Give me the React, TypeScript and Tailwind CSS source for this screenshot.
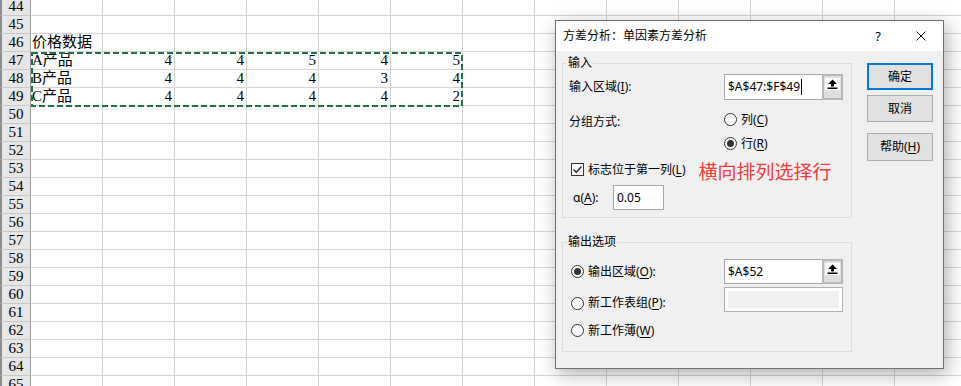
import React from "react";

const COLS = 13;

function Radio({ checked = false }: { checked?: boolean }) {
  return (
    <div className="w-[13px] h-[13px] shrink-0 rounded-full border border-[#333333] bg-white flex items-center justify-center">
      {checked && <div className="w-[7px] h-[7px] rounded-full bg-[#333333]" />}
    </div>
  );
}

function Checkbox() {
  return (
    <div className="w-[13px] h-[13px] shrink-0 border border-[#333333] bg-white flex items-center justify-center">
      <svg width="11" height="11" viewBox="0 0 11 11">
        <polyline points="1.5,5.5 4.2,8.2 9.5,2.5" fill="none" stroke="#222" strokeWidth="1.3" />
      </svg>
    </div>
  );
}

function UpArrow() {
  return (
    <svg width="11" height="10" viewBox="0 0 11 10">
      <polygon points="5.5,0.5 10,5 7,5 7,7.5 4,7.5 4,5 1,5" fill="#000" />
      <rect x="0.5" y="8.5" width="10" height="1.5" fill="#000" />
    </svg>
  );
}

function RefField({ value, cursor = false }: { value: string; cursor?: boolean }) {
  return (
    <div className="w-[119px] h-full flex border border-[#a8a8a8] bg-white">
      <div className="flex-1 flex items-center pl-[3px] text-[12px] leading-[16px]">
        <span>{value}</span>
        {cursor && <span className="ml-[1px] w-[1px] h-[16px] bg-black" />}
      </div>
      <div className="w-[21px] -my-[1px] -mr-[1px] bg-[#dedede] border-2 border-[#b8b8b8] flex flex-col items-center pt-[2px]">
        <div className="w-[15px] h-[12px] bg-white flex items-center justify-center">
          <UpArrow />
        </div>
      </div>
    </div>
  );
}

function U({ children }: { children: React.ReactNode }) {
  return <span className="underline underline-offset-2">{children}</span>;
}

export default function App() {
  const rows = Array.from({ length: 22 }, (_, i) => 44 + i);
  const data: Record<number, { a: string; nums?: number[] }> = {
    46: { a: "价格数据" },
    47: { a: "A产品", nums: [4, 4, 5, 4, 5] },
    48: { a: "B产品", nums: [4, 4, 4, 3, 4] },
    49: { a: "C产品", nums: [4, 4, 4, 4, 2] },
  };

  return (
    <div className="relative w-[961px] h-[386px] overflow-hidden bg-white">
      {/* Spreadsheet grid */}
      <div className="-mt-[2px] flex flex-col font-['Liberation_Serif','Noto_Sans_CJK_SC',serif] text-[15px] text-black">
        {rows.map((r) => {
          const d = data[r];
          return (
            <div key={r} className="flex h-[18px] shrink-0">
              <div className="w-[31px] shrink-0 h-full flex items-center justify-center bg-[#e6e6e6] border-l-2 border-l-[#8c8c8c] border-r border-r-[#9e9e9e] border-b border-b-[#c8c8c8] leading-[17px]">
                {r}
              </div>
              {Array.from({ length: COLS }, (_, c) => {
                let content: React.ReactNode = null;
                let align = "justify-start pl-[1px]";
                if (d) {
                  if (c === 0) content = d.a;
                  else if (d.nums && c <= 5) {
                    content = d.nums[c - 1];
                    align = "justify-end pr-[2px]";
                  }
                }
                return (
                  <div
                    key={c}
                    className={`w-[72px] shrink-0 h-full flex items-center whitespace-nowrap border-r border-b border-[#d4d4d4] leading-[17px] ${align}`}
                  >
                    {content}
                  </div>
                );
              })}
            </div>
          );
        })}
      </div>

      {/* Copy marquee */}
      <svg className="absolute left-[30px] top-[51px]" width="434" height="57">
        <rect x="2" y="2" width="430" height="53" fill="none" stroke="#217346" strokeWidth="2" strokeDasharray="6 3" />
      </svg>

      {/* Dialog */}
      <div className="absolute left-[555px] top-[20px] w-[389px] h-[349px] border border-[#707070] bg-[#f0f0f0] shadow-[3px_5px_18px_rgba(0,0,0,0.32)] flex flex-col font-['Noto_Sans','Noto_Sans_CJK_SC',sans-serif] text-[12px] text-black">
        <div className="h-[30px] shrink-0 bg-white flex items-center pl-[7px]">
          <span className="leading-[16px]">方差分析：单因素方差分析</span>
          <span className="ml-auto text-[13px] leading-[16px]">?</span>
          <svg className="ml-[35px] mr-[17px]" width="10" height="10" viewBox="0 0 10 10">
            <path d="M0.5 0.5 L9.5 9.5 M9.5 0.5 L0.5 9.5" stroke="#111" strokeWidth="1" />
          </svg>
        </div>

        <div className="flex pl-[6px]">
          <div className="w-[290px] pt-[4px] flex flex-col">
            <fieldset className="border border-[#dcdcdc] pb-[7px]">
              <legend className="ml-[4px] px-[1px] leading-[16px]">输入</legend>
              <div className="mt-[3px] h-[26px] flex items-center">
                <div className="w-[161px] pl-[6px] leading-[16px]">
                  输入区域(<U>I</U>):
                </div>
                <RefField value="$A$47:$F$49" cursor />
              </div>
              <div className="mt-[11px] flex">
                <div className="w-[161px] pl-[6px] pt-[2px] leading-[17px]">分组方式:</div>
                <div className="flex flex-col gap-[7px]">
                  <div className="h-[17px] flex items-center">
                    <Radio />
                    <span className="ml-[4px] leading-[16px]">
                      列(<U>C</U>)
                    </span>
                  </div>
                  <div className="h-[17px] flex items-center">
                    <Radio checked />
                    <span className="ml-[4px] leading-[16px]">
                      行(<U>R</U>)
                    </span>
                  </div>
                </div>
              </div>
              <div className="mt-[9px] h-[17px] flex items-center pl-[8px]">
                <Checkbox />
                <span className="ml-[4px] leading-[16px]">
                  标志位于第一列(<U>L</U>)
                </span>
                <span className="ml-[13px] mt-[5px] text-[19px] leading-[20px] text-[#f03c3c] whitespace-nowrap">
                  横向排列选择行
                </span>
              </div>
              <div className="mt-[7px] h-[25px] flex items-center">
                <div className="w-[50px] pl-[10px] leading-[16px]">
                  α(<U>A</U>):
                </div>
                <div className="w-[51px] h-full border border-[#a8a8a8] bg-white flex items-center pl-[3px] leading-[16px]">
                  0.05
                </div>
              </div>
            </fieldset>

            <fieldset className="mt-[16px] border border-[#dcdcdc] pb-[12px]">
              <legend className="ml-[4px] px-[1px] leading-[16px]">输出选项</legend>
              <div className="mt-[9px] h-[25px] flex items-center">
                <div className="w-[161px] pl-[8px] flex items-center">
                  <Radio checked />
                  <span className="ml-[4px] leading-[16px]">
                    输出区域(<U>O</U>):
                  </span>
                </div>
                <RefField value="$A$52" />
              </div>
              <div className="mt-[3px] h-[25px] flex items-center">
                <div className="w-[161px] pl-[8px] mt-[7px] flex items-center">
                  <Radio />
                  <span className="ml-[4px] leading-[16px]">
                    新工作表组(<U>P</U>):
                  </span>
                </div>
                <div className="w-[119px] h-full border border-[#b0b0b0] bg-white p-[3px]">
                  <div className="w-full h-full bg-[#f0f0f0]" />
                </div>
              </div>
              <div className="mt-[10px] h-[17px] flex items-center pl-[8px]">
                <Radio />
                <span className="ml-[4px] leading-[16px]">
                  新工作薄(<U>W</U>)
                </span>
              </div>
            </fieldset>
          </div>

          <div className="ml-[15px] mt-[12px] w-[66px] flex flex-col">
            <button className="h-[27px] border-2 border-[#0078d7] bg-[#e1e1e1] flex items-center justify-center leading-[16px]">
              确定
            </button>
            <button className="mt-[5px] h-[27px] border border-[#adadad] bg-[#e1e1e1] flex items-center justify-center leading-[16px]">
              取消
            </button>
            <button className="mt-[11px] h-[28px] border border-[#adadad] bg-[#e1e1e1] flex items-center justify-center leading-[16px]">
              帮助(<U>H</U>)
            </button>
          </div>
        </div>
      </div>
    </div>
  );
}
